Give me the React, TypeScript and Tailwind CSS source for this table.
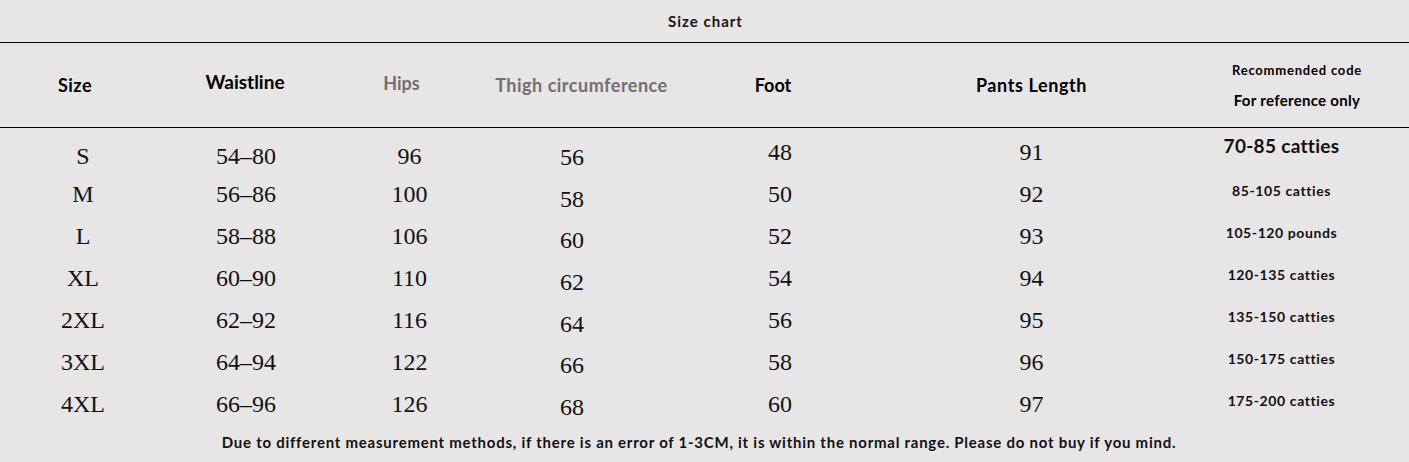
import React from "react";

const sans = "font-['Lato','Open_Sans','Noto_Sans',sans-serif]";
const serif = "font-['Liberation_Serif','Times_New_Roman',serif]";

type Col = { values: string[]; pt: string; first: string };

const bodyCols: Col[] = [
  { values: ["S", "M", "L", "XL", "2XL", "3XL", "4XL"], pt: "pt-[11px]", first: "h-[34px]" },
  { values: ["54–80", "56–86", "58–88", "60–90", "62–92", "64–94", "66–96"], pt: "pt-[11px]", first: "h-[34px]" },
  { values: ["96", "100", "106", "110", "116", "122", "126"], pt: "pt-[11px]", first: "h-[34px]" },
  { values: ["56", "58", "60", "62", "64", "66", "68"], pt: "pt-[8px]", first: "h-[42px]" },
  { values: ["48", "50", "52", "54", "56", "58", "60"], pt: "pt-[3px]", first: "h-[42px]" },
  { values: ["91", "92", "93", "94", "95", "96", "97"], pt: "pt-[3px]", first: "h-[42px]" },
];

const recs = [
  "85-105 catties",
  "105-120 pounds",
  "120-135 catties",
  "135-150 catties",
  "150-175 catties",
  "175-200 catties",
];

const bodyWidths = ["w-[166px]", "w-[160px]", "w-[167px]", "w-[158px]", "w-[258px]", "w-[245px]"];

export default function App() {
  return (
    <div className={`w-[1409px] h-[462px] bg-[#e7e5e6] text-black overflow-hidden ${sans}`}>
      <div className="h-[42px] flex items-center justify-center pl-[2px]">
        <span className="text-[15px] font-bold tracking-[1px] text-[#1c1414]">Size chart</span>
      </div>
      <div className="h-px bg-black" />
      <div className="h-[84px] flex text-[18px] font-bold">
        <div className="w-[150px] flex items-center justify-center tracking-[0.5px]">Size</div>
        <div className="w-[190px] flex items-center justify-center pb-[5px] text-[19px]">Waistline</div>
        <div className="w-[123px] flex items-center justify-center pb-[3px] text-[#707070]">Hips</div>
        <div className="w-[237px] flex items-center justify-center text-[#707070] tracking-[0.5px]">
          Thigh circumference
        </div>
        <div className="w-[146px] flex items-center justify-center">Foot</div>
        <div className="w-[371px] flex items-center justify-center tracking-[0.6px]">Pants Length</div>
        <div className="w-[160px] flex flex-col items-center justify-center gap-[10px] whitespace-nowrap">
          <div className="leading-[20px] text-[13px] tracking-[0.8px]">Recommended code</div>
          <div className="leading-[20px] text-[15px] tracking-[0.3px]">For reference only</div>
        </div>
      </div>
      <div className="h-px bg-black" />
      <div className="h-[300px] flex">
        {bodyCols.map((c, i) => (
          <div key={i} className={`${bodyWidths[i]} ${c.pt} flex flex-col items-center text-[24px] text-[#111] ${serif}`}>
            {c.values.map((v, j) => (
              <div key={j} className={`${j === 0 ? c.first : "h-[42px]"} flex items-center justify-center whitespace-nowrap`}>
                {v}
              </div>
            ))}
          </div>
        ))}
        <div className="w-[255px] flex flex-col items-center font-bold text-[#111]">
          <div className="h-[36px] flex items-center justify-center text-[19px] tracking-[0.3px] whitespace-nowrap">
            70-85 catties
          </div>
          {recs.map((r, j) => (
            <div
              key={j}
              className={`h-[42px] ${j === 0 ? "mt-[5px]" : ""} flex items-center justify-center text-[14px] tracking-[0.6px] whitespace-nowrap`}
            >
              {r}
            </div>
          ))}
        </div>
      </div>
      <div className="h-[28px] flex items-center justify-center pr-[11px]">
        <span className="text-[15px] font-bold tracking-[0.75px] whitespace-nowrap text-[#111]">
          Due to different measurement methods, if there is an error of 1-3CM, it is within the normal range. Please do not buy if you mind.
        </span>
      </div>
    </div>
  );
}
